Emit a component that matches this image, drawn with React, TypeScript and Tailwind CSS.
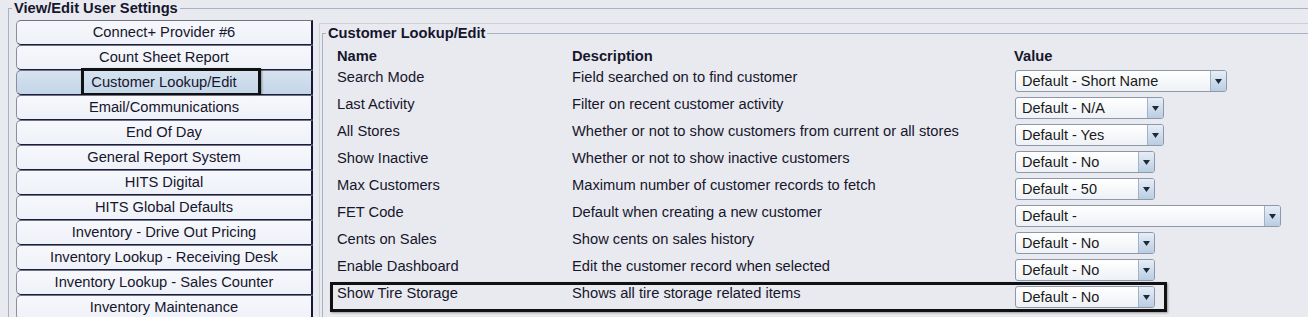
const menuItems = [
  "Connect+ Provider #6",
  "Count Sheet Report",
  "Customer Lookup/Edit",
  "Email/Communications",
  "End Of Day",
  "General Report System",
  "HITS Digital",
  "HITS Global Defaults",
  "Inventory - Drive Out Pricing",
  "Inventory Lookup - Receiving Desk",
  "Inventory Lookup - Sales Counter",
  "Inventory Maintenance",
];

type Setting = { name: string; desc: string; value: string; width: string };

const settings: Setting[] = [
  { name: "Search Mode", desc: "Field searched on to find customer", value: "Default - Short Name", width: "w-[212px]" },
  { name: "Last Activity", desc: "Filter on recent customer activity", value: "Default - N/A", width: "w-[149px]" },
  { name: "All Stores", desc: "Whether or not to show customers from current or all stores", value: "Default - Yes", width: "w-[149px]" },
  { name: "Show Inactive", desc: "Whether or not to show inactive customers", value: "Default - No", width: "w-[140px]" },
  { name: "Max Customers", desc: "Maximum number of customer records to fetch", value: "Default - 50", width: "w-[140px]" },
  { name: "FET Code", desc: "Default when creating a new customer", value: "Default -", width: "w-[266px]" },
  { name: "Cents on Sales", desc: "Show cents on sales history", value: "Default - No", width: "w-[140px]" },
  { name: "Enable Dashboard", desc: "Edit the customer record when selected", value: "Default - No", width: "w-[140px]" },
  { name: "Show Tire Storage", desc: "Shows all tire storage related items", value: "Default - No", width: "w-[140px]" },
];

const Dropdown = ({ value, width }: { value: string; width: string }) => (
  <div
    className={`${width} flex h-[22px] rounded-[3px] border border-[#8d98aa] bg-linear-to-b from-white to-[#eef1f6]`}
  >
    <span className="flex-1 truncate pl-[6px] text-[14.5px] leading-[20px] text-[#1a1a1a]">{value}</span>
    <span className="flex w-[16px] items-center justify-center rounded-r-[2px] border-l border-[#a3b1c4] bg-linear-to-b from-[#e6eef8] to-[#b9cde2]">
      <svg width="7" height="5" viewBox="0 0 7 5">
        <polygon points="0,0 7,0 3.5,5" fill="#1f2a38" />
      </svg>
    </span>
  </div>
);

export default function App() {
  return (
    <div className="h-[317px] w-[1308px] overflow-hidden bg-[#e9eaef] font-['Liberation_Sans',Arial,sans-serif] text-[14.7px] text-[#16162c]">
      <fieldset className="ml-[8px] w-[1340px] border border-[#a7b2c5] pb-[20px]">
        <legend className="ml-[3px] px-[2px] text-[14.7px] font-bold leading-[16px] text-[#15152e]">
          View/Edit User Settings
        </legend>
        <div className="mt-[4px] flex items-start pl-[7px]">
          {/* settings category list */}
          <div className="flex w-[297px] flex-col">
            {menuItems.map((item, i) => (
              <div
                key={item}
                className={`relative flex h-[25px] items-center justify-center rounded-l-[5px] border-t border-r-2 border-b border-l border-t-[#6f7385] border-r-[#16163a] border-b-[#1c1c3c] border-l-[#8a8ea0] pb-px leading-[16px] ${
                  i === 2 ? "bg-linear-to-b from-[#d6e3f0] to-[#c3d5e8]" : "bg-linear-to-b from-[#f7f8fc] to-[#eef1f8]"
                }`}
              >
                {item}
                {i === 2 && (
                  <div className="absolute top-[-3px] left-[64px] h-[28px] w-[180px] border-[3px] border-[#111] shadow-[1px_1px_2px_rgba(0,0,0,0.35)]" />
                )}
              </div>
            ))}
          </div>

          {/* settings detail panel */}
          <div className="mt-[3px] ml-[6px] flex-1 border-t border-l border-[#cdd0d7] pt-px pl-[2px]">
            <fieldset className="border border-[#a7b2c5] pb-[40px]">
              <legend className="ml-[3px] px-[2px] font-bold leading-[16px] text-[#15152e]">
                Customer Lookup/Edit
              </legend>
              <div className="mt-[7px] pl-[14px]">
                <div className="flex h-[21px] font-bold leading-[16px]">
                  <span className="w-[235px]">Name</span>
                  <span className="w-[442px]">Description</span>
                  <span>Value</span>
                </div>
                {settings.map((s, i) => (
                  <div key={s.name} className="relative flex h-[27px] items-start">
                    <span className="w-[235px] leading-[16px]">{s.name}</span>
                    <span className="w-[442px] leading-[16px]">{s.desc}</span>
                    <div className="mt-px pl-px">
                      <Dropdown value={s.value} width={s.width} />
                    </div>
                    {i === settings.length - 1 && (
                      <div className="absolute top-[-3px] left-[-7px] h-[30px] w-[837px] border-[3px] border-[#111] shadow-[1px_1px_2px_rgba(0,0,0,0.35)]" />
                    )}
                  </div>
                ))}
              </div>
            </fieldset>
          </div>
        </div>
      </fieldset>
    </div>
  );
}
